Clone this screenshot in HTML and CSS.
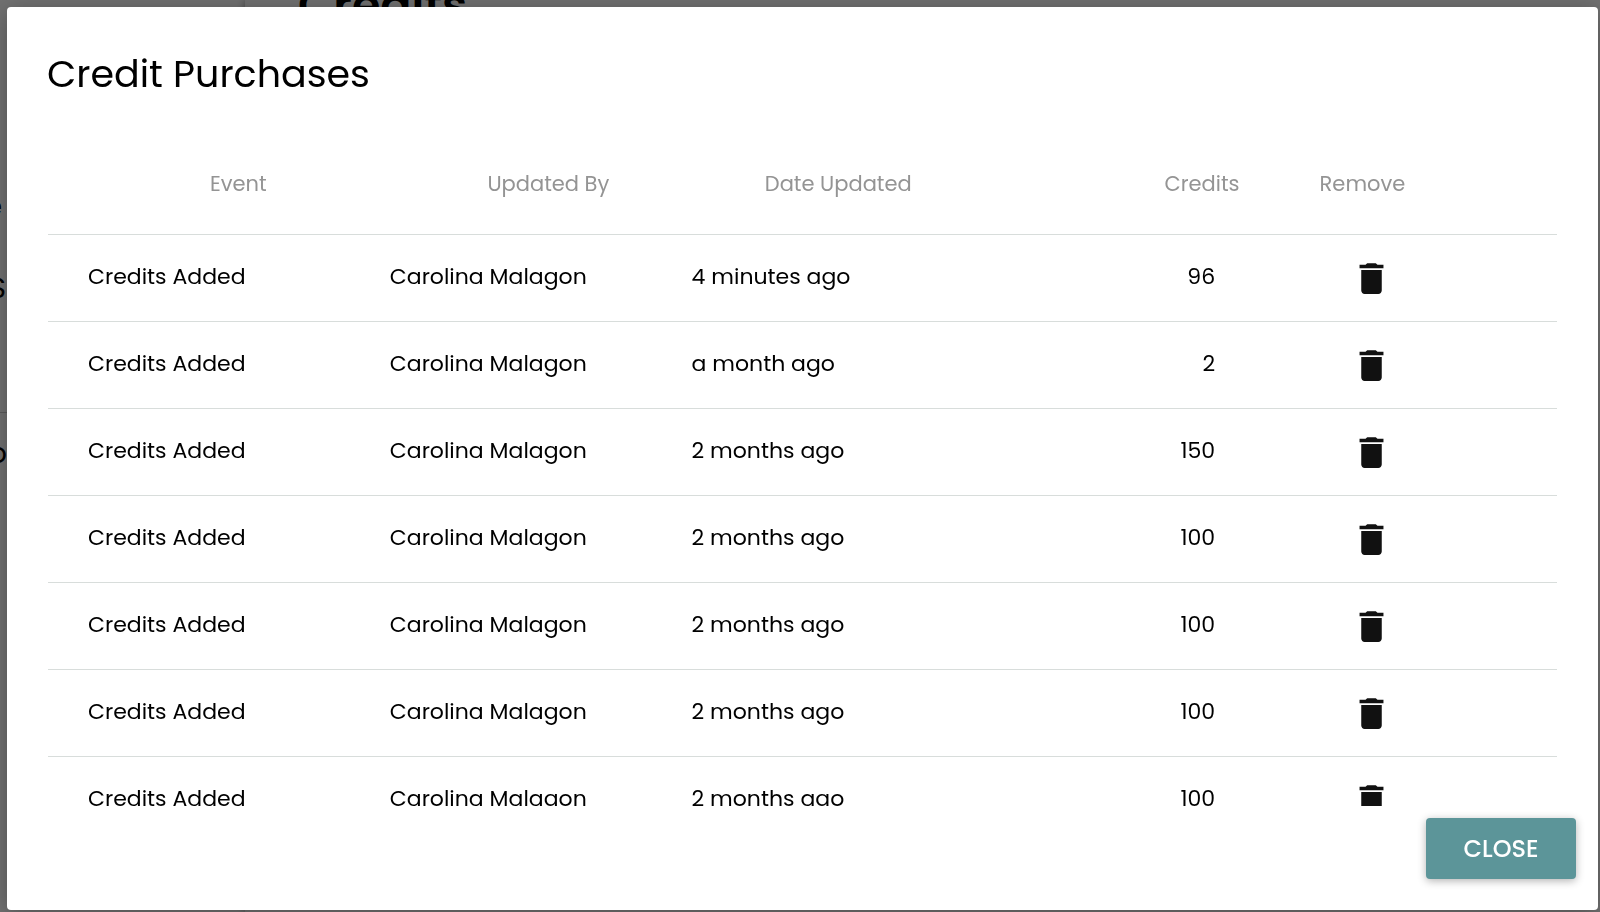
FILE: index.html
```
<!DOCTYPE html>
<html lang="en">
<head>
    <meta charset="UTF-8">
    <meta name="viewport" content="width=device-width, initial-scale=1.0">
    <title>Credit Purchases</title>
    <link rel="stylesheet" href="styles.css">
</head>
<body>
    <!-- page behind the dialog -->
    <div class="page" aria-hidden="true">
        <div class="sidebar">
            <span class="nav-item nav-short">e</span>
            <span class="nav-item">S</span>
            <span class="nav-item nav-divided">o</span>
        </div>
        <div class="content">
            <div class="page-title">Credits</div>
        </div>
    </div>

    <div class="backdrop">
        <div class="dialog" role="dialog" aria-modal="true" aria-labelledby="dialog-title">
            <h1 class="dialog-title" id="dialog-title">Credit Purchases</h1>

            <div class="dialog-content">
                <table class="purchases">
                    <thead>
                        <tr>
                            <th scope="col">Event</th>
                            <th scope="col">Updated By</th>
                            <th scope="col">Date Updated</th>
                            <th scope="col" class="number">Credits</th>
                            <th scope="col">Remove</th>
                        </tr>
                    </thead>
                    <tbody id="purchases-body"></tbody>
                </table>
            </div>

            <div class="dialog-actions">
                <button type="button" class="close-button">CLOSE</button>
            </div>
        </div>
    </div>

    <script>
        const purchases = [
            { event: 'Credits Added', updatedBy: 'Carolina Malagon', date: '4 minutes ago', credits: 96 },
            { event: 'Credits Added', updatedBy: 'Carolina Malagon', date: 'a month ago', credits: 2 },
            { event: 'Credits Added', updatedBy: 'Carolina Malagon', date: '2 months ago', credits: 150 },
            { event: 'Credits Added', updatedBy: 'Carolina Malagon', date: '2 months ago', credits: 100 },
            { event: 'Credits Added', updatedBy: 'Carolina Malagon', date: '2 months ago', credits: 100 },
            { event: 'Credits Added', updatedBy: 'Carolina Malagon', date: '2 months ago', credits: 100 },
            { event: 'Credits Added', updatedBy: 'Carolina Malagon', date: '2 months ago', credits: 100 }
        ];

        const body = document.getElementById('purchases-body');

        purchases.forEach(purchase => {
            const row = document.createElement('tr');
            row.innerHTML = `
                <td>${purchase.event}</td>
                <td>${purchase.updatedBy}</td>
                <td>${purchase.date}</td>
                <td class="number">${purchase.credits}</td>
                <td class="remove">
                    <button type="button" class="remove-button" aria-label="Remove">
                        <svg viewBox="0 0 24 24"><path d="M6 19c0 1.1.9 2 2 2h8c1.1 0 2-.9 2-2V7H6v12zM19 4h-3.5l-1-1h-5l-1 1H5v2h14V4z"/></svg>
                    </button>
                </td>
            `;
            body.appendChild(row);
        });
    </script>
</body>
</html>
```
FILE: styles.css
```
* {
    box-sizing: border-box;
    margin: 0;
    padding: 0;
    font-family: Poppins, "Open Sans", sans-serif;
}

body {
    height: 100vh;
    overflow: hidden;
    background-color: #fff;
}

/* page behind */
.page {
    display: flex;
    height: 100vh;
    overflow: hidden;
    color: #000;
}

.sidebar {
    display: flex;
    flex-direction: column;
    align-items: flex-end;
    width: 7px;
    padding-top: 166px;
    overflow: hidden;
}

.nav-item {
    height: 82px;
    padding-right: 1px;
    font-size: 28px;
    line-height: 82px;
}

.nav-short {
    padding-right: 5px;
}

.nav-divided {
    margin-top: 82px;
    padding-right: 0;
    border-top: 1px solid #ccc;
}

.content {
    flex: 1;
    margin-left: 238px;
    padding-left: 53px;
    box-shadow: 0 0 8px rgba(0, 0, 0, 0.4);
}

.page-title {
    margin-top: -25px;
    font-size: 46px;
    font-weight: 600;
    line-height: 60px;
}

.backdrop {
    position: fixed;
    inset: 0;
    display: flex;
    padding: 7px 2px 2px 7px;
    background-color: rgba(0, 0, 0, 0.56);
}

/* dialog */
.dialog {
    flex: 1;
    display: flex;
    flex-direction: column;
    min-width: 0;
    background-color: #fff;
    border-radius: 4px;
    box-shadow: 0 4px 24px rgba(0, 0, 0, 0.3);
}

.dialog-title {
    padding: 40px 40px 32px;
    font-size: 38px;
    font-weight: 400;
    line-height: 54px;
}

.dialog-content {
    flex: 1;
    min-height: 0;
    padding: 0 41px;
    overflow: hidden;
}

.purchases {
    display: block;
    width: 100%;
}

.purchases thead,
.purchases tbody {
    display: block;
}

.purchases tr {
    display: grid;
    grid-template-columns: repeat(5, 1fr);
    align-items: center;
    height: 87px;
    border-bottom: 1px solid #d8dddb;
}

.purchases thead tr {
    height: 102px;
    padding-left: 122px;
}

.purchases th,
.purchases td {
    padding: 0 40px;
    font-weight: 400;
    text-align: left;
    white-space: nowrap;
}

.purchases th {
    font-size: 21px;
    color: #949494;
}

.purchases td {
    padding-bottom: 4px;
    font-size: 22px;
    color: #000;
}

.purchases .number {
    text-align: right;
}

.purchases .remove {
    padding-bottom: 0;
    padding-left: 96px;
}

.remove-button {
    display: block;
    width: 41px;
    height: 41px;
    border: none;
    background: none;
    cursor: pointer;
}

.remove-button svg {
    display: block;
    fill: #111;
}

.dialog-actions {
    display: flex;
    justify-content: flex-end;
    padding: 12px 22px 31px;
}

.close-button {
    width: 150px;
    height: 61px;
    border: none;
    border-radius: 4px;
    background-color: #5c9599;
    box-shadow: 0 2px 8px rgba(0, 0, 0, 0.3);
    color: #fff;
    font-size: 24px;
    font-weight: 500;
    cursor: pointer;
}
```
